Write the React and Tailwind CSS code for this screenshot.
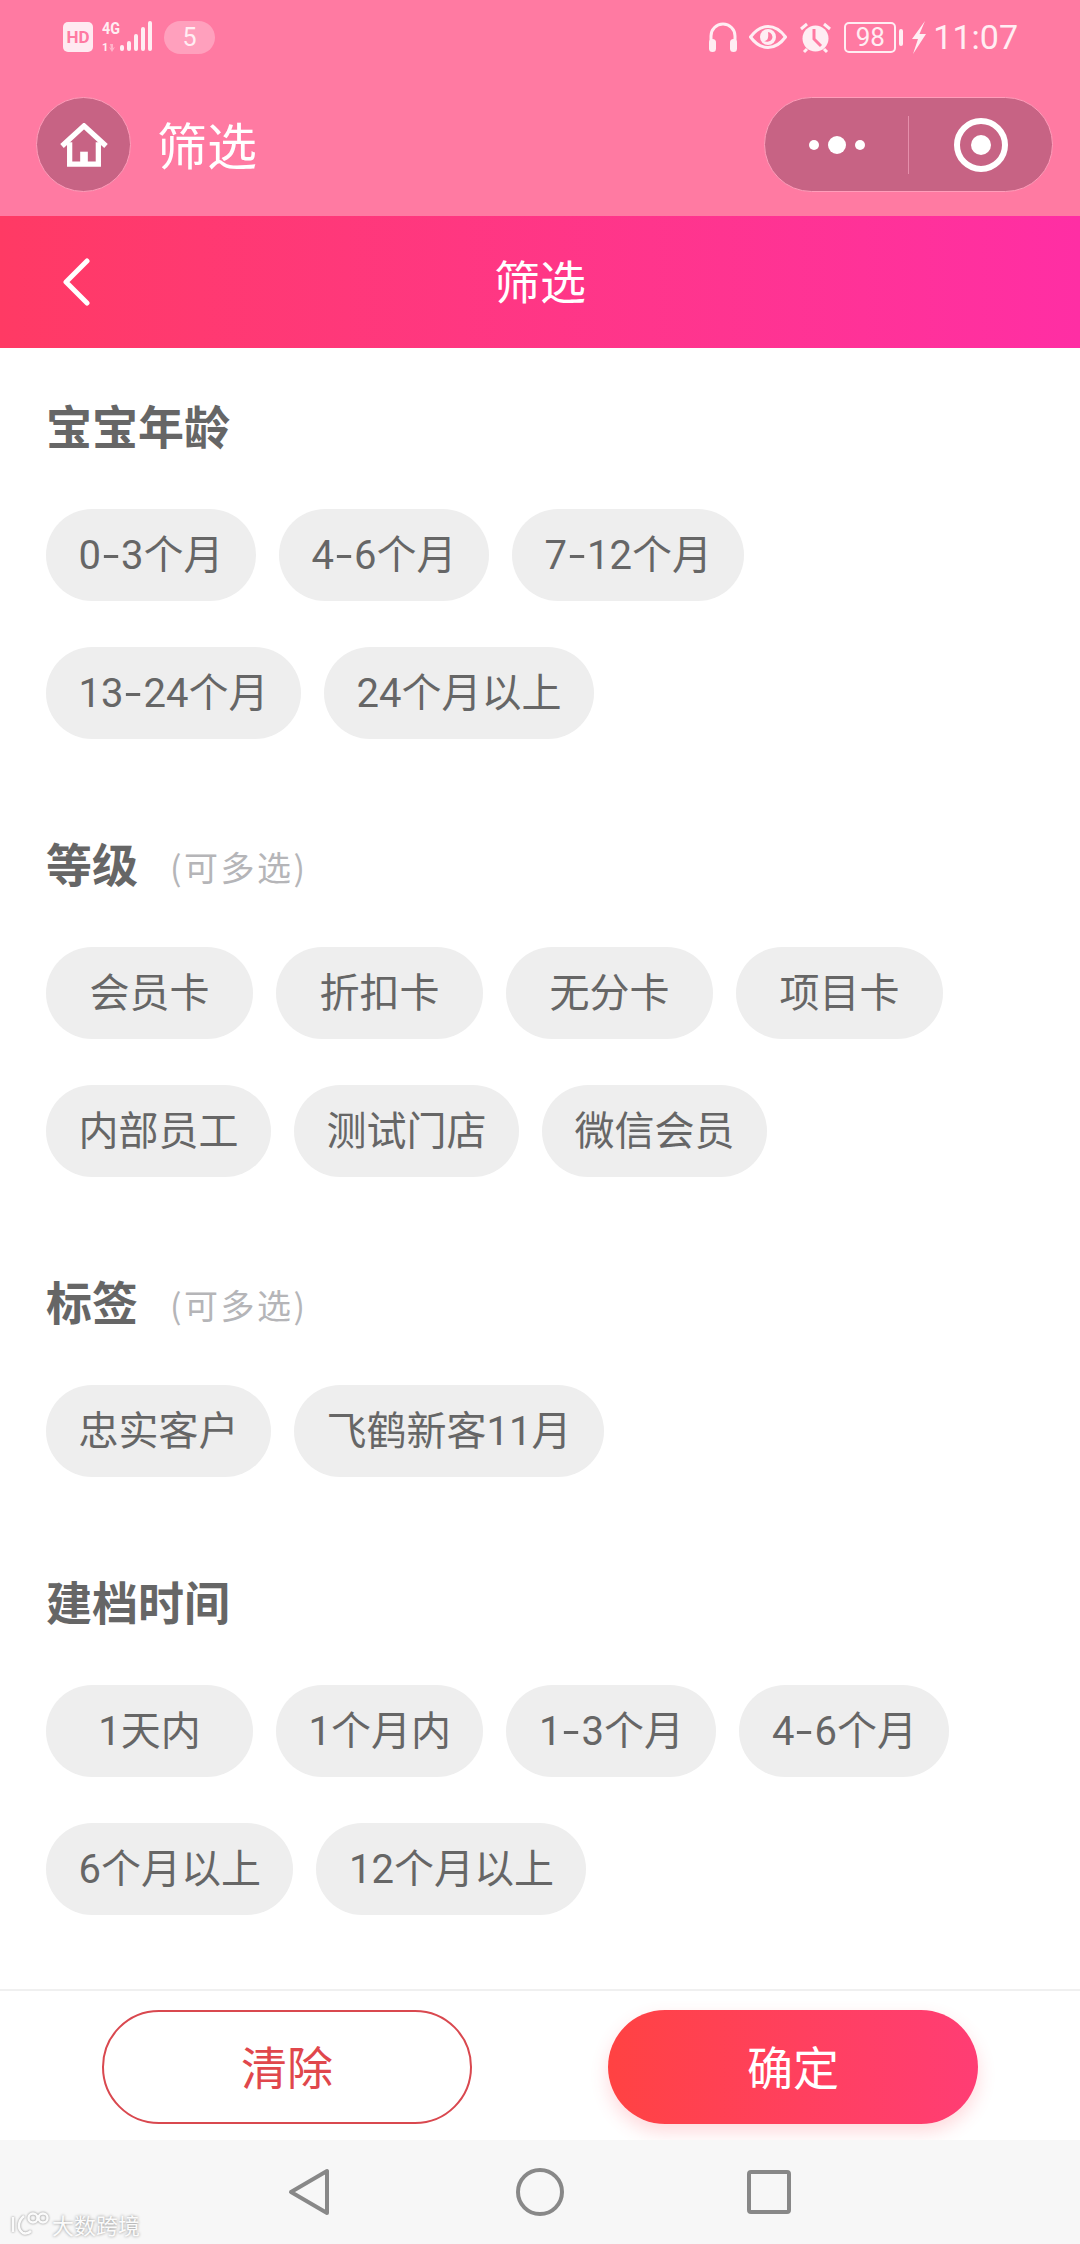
import React from "react";

const sections = [
  { title: "宝宝年龄", rows: [["0-3个月", "4-6个月", "7-12个月"], ["13-24个月", "24个月以上"]] },
  { title: "等级", multi: true, rows: [["会员卡", "折扣卡", "无分卡", "项目卡"], ["内部员工", "测试门店", "微信会员"]] },
  { title: "标签", multi: true, rows: [["忠实客户", "飞鹤新客11月"]] },
  { title: "建档时间", rows: [["1天内", "1个月内", "1-3个月", "4-6个月"], ["6个月以上", "12个月以上"]] },
];

function StatusBar() {
  return (
    <div className="h-[74px] flex items-center justify-between pl-[63px] pr-[62px] text-[#ffeef3]">
      <div className="flex items-center">
        <div className="w-[30px] h-[30px] rounded-[5px] bg-[#ffeaf1] text-[#ff7aa2] text-[17px] font-bold leading-none flex items-center justify-center" style={{ fontFamily: "Roboto, sans-serif" }}>HD</div>
        {/* 4G + signal */}
        <svg width="52" height="32" viewBox="0 0 52 32" className="ml-[9px]" fill="#ffeef3">
          <text x="0" y="13" fontSize="16" fontWeight="700" textLength="18" lengthAdjust="spacingAndGlyphs" fontFamily="Roboto, sans-serif">4G</text>
          <text x="0" y="30" fontSize="11" fontWeight="700" fontFamily="Roboto, sans-serif">1</text>
          <path d="M8 23h3v4l2-1-3 5-3-5 2 1z" fill="#ffb3c9" />
          <rect x="18" y="24" width="4" height="6" rx="2" />
          <rect x="25" y="20" width="4" height="10" rx="2" />
          <rect x="32" y="13" width="4" height="17" rx="2" />
          <rect x="39" y="6" width="4" height="24" rx="2" />
          <rect x="46" y="0" width="4" height="30" rx="2" />
        </svg>
        <div className="ml-[10px] w-[51px] h-[33px] rounded-full bg-[#ffa0bd] text-[#ffeef3] text-[25px] leading-[33px] text-center" style={{ fontFamily: "Roboto, sans-serif" }}>5</div>
      </div>
      <div className="flex items-center">
        <svg width="30" height="32" viewBox="0 0 30 32" fill="none">
          <path d="M3 22V15a12 12 0 0 1 24 0v7" stroke="#ffeef3" strokeWidth="3" />
          <rect x="1" y="18" width="7" height="13" rx="3.5" fill="#ffeef3" />
          <rect x="22" y="18" width="7" height="13" rx="3.5" fill="#ffeef3" />
        </svg>
        <svg width="38" height="24" viewBox="0 0 38 24" fill="none" className="ml-[11px]">
          <path d="M1.500 12C7 4.500 12.500 1.500 19 1.500S31 4.500 36.500 12C31 19.500 25.500 22.500 19 22.500S7 19.500 1.500 12z" stroke="#ffeef3" strokeWidth="3" />
          <circle cx="19" cy="12" r="8" fill="#ffeef3" />
          <path d="M19 7a5 5 0 0 1 4 7 6 6 0 0 1-8 2c3 0 5-2 4-9z" fill="#ff7aa2" />
        </svg>
        <svg width="33" height="33" viewBox="0 0 33 33" className="ml-[12px]" fill="none">
          <circle cx="16.500" cy="17.500" r="13" fill="#ffeef3" />
          <path d="M15 8v10l7 7" stroke="#ff7aa2" strokeWidth="3" />
          <path d="M2 8l6-5M31 8l-6-5M5 31l3-3M28 31l-3-3" stroke="#ffeef3" strokeWidth="3" />
        </svg>
        <div className="ml-[12px] w-[52px] h-[31px] rounded-[5px] border-2 border-[#ffeef3] text-[26px] leading-[27px] text-center" style={{ fontFamily: "Roboto, sans-serif" }}>98</div>
        <div className="ml-[3px] w-[4px] h-[17px] rounded-[2px] bg-[#ffeef3]" />
        <svg width="15" height="33" viewBox="0 0 15 33" className="ml-[8px]" fill="#ffeef3">
          <path d="M14 0L1 18h6L2 33l13-20H8.500L14 0z" />
        </svg>
        <span className="ml-[7px] text-[34px] leading-none" style={{ fontFamily: "Roboto, sans-serif" }}>11:07</span>
      </div>
    </div>
  );
}

function MiniBar() {
  return (
    <div className="h-[142px] flex items-start justify-between pt-[23px] pl-[36px] pr-[27px]">
      <div className="flex items-center">
        <div className="w-[95px] h-[95px] rounded-full bg-[#c76384] border border-[#ff9dba] flex items-center justify-center">
          <svg width="48" height="44" viewBox="0 0 50 46" fill="none">
            <path d="M2 24L25 3l23 21" stroke="#fff" strokeWidth="5.500" strokeLinejoin="miter" />
            <path d="M10 20v23h30V20" stroke="#fff" strokeWidth="5.500" />
            <rect x="21" y="30" width="8" height="12" fill="#fff" />
          </svg>
        </div>
        <span className="ml-[26px] pb-[4px] text-[50px] leading-none text-white">筛选</span>
      </div>
      <div className="w-[289px] h-[95px] rounded-full bg-[#c76384] border border-[#ff9dba] flex items-center">
        <div className="w-[143px] flex items-center justify-center gap-[9px]">
          <span className="w-[10px] h-[10px] rounded-full bg-white" />
          <span className="w-[18px] h-[18px] rounded-full bg-white" />
          <span className="w-[10px] h-[10px] rounded-full bg-white" />
        </div>
        <div className="w-[1px] h-[58px] bg-[#e58fab]" />
        <div className="flex-1 flex items-center justify-center">
          <div className="w-[54px] h-[54px] rounded-full border-[6px] border-white flex items-center justify-center">
            <span className="w-[20px] h-[20px] rounded-full bg-white" />
          </div>
        </div>
      </div>
    </div>
  );
}

// the hyphen in the reference font is wider than Roboto's
function ChipLabel({ text }) {
  const parts = text.split("-");
  if (parts.length === 1) return text;
  return (
    <>
      {parts[0]}
      <span className="inline-block w-[20px] text-center scale-x-150">-</span>
      {parts[1]}
    </>
  );
}

function Section({ title, multi, rows }) {
  return (
    <div className="mb-[96px]">
      <div className="h-[62px] flex items-center pl-[46px] mb-[50px]">
        <span className="pb-[8px] text-[46px] leading-none font-bold text-[#666666]">{title}</span>
        {multi && <span className="ml-[32px] mt-[2px] text-[34px] leading-none tracking-[2.5px] text-[#b5b5b8]">(可多选)</span>}
      </div>
      <div className="flex flex-col gap-y-[46px] px-[46px]">
        {rows.map((row, i) => (
          <div key={i} className="flex gap-x-[23px]">
            {row.map((chip) => (
              <div
                key={chip}
                className="h-[92px] min-w-[207px] px-[32.5px] pt-[1px] rounded-full bg-[#eeeeee] text-[#666666] text-[40px] leading-none flex items-center justify-center whitespace-nowrap"
                style={{ fontFamily: 'Roboto, "Noto Sans CJK SC", sans-serif' }}
              >
                <span><ChipLabel text={chip} /></span>
              </div>
            ))}
          </div>
        ))}
      </div>
    </div>
  );
}

export default function App() {
  return (
    <div className="h-[2244px] flex flex-col bg-white overflow-hidden" style={{ fontFamily: '"Noto Sans CJK SC", sans-serif' }}>
      <div className="bg-[#ff7aa2]">
        <StatusBar />
        <MiniBar />
      </div>
      <div className="h-[132px] shrink-0 bg-gradient-to-r from-[#ff3a64] to-[#ff2ea4] grid grid-cols-[1fr_auto_1fr] items-center">
        <div className="pl-[62px]">
          <svg width="28" height="48" viewBox="0 0 28 48" fill="none">
            <path d="M25 3L4 24l21 21" stroke="#fff" strokeWidth="5" strokeLinecap="round" strokeLinejoin="round" />
          </svg>
        </div>
        <span className="pb-[6px] text-[46px] text-white leading-none">筛选</span>
        <div />
      </div>
      <div className="flex-1 min-h-0 pt-[49px]">
        {sections.map((s) => (
          <Section key={s.title} {...s} />
        ))}
      </div>
      <div className="h-[151px] shrink-0 border-t-2 border-[#f0f0f0] flex items-start justify-between pt-[19px] pl-[102px] pr-[102px]">
        <button className="w-[370px] h-[114px] pb-[4px] rounded-full border-2 border-[#d9484f] text-[#e0474c] text-[46px] leading-none">清除</button>
        <button className="w-[370px] h-[114px] pb-[4px] rounded-full bg-gradient-to-r from-[#ff4242] to-[#ff3d74] text-white text-[46px] leading-none shadow-[0_8px_18px_rgba(255,64,80,0.2)]">确定</button>
      </div>
      <div className="relative h-[104px] shrink-0 bg-[#f7f7f7] flex items-center pl-[288px]">
        <svg width="42" height="48" viewBox="0 0 42 48" fill="none">
          <path d="M39 3v42L3 24 39 3z" stroke="#888" strokeWidth="4" strokeLinejoin="round" />
        </svg>
        <svg width="48" height="48" viewBox="0 0 48 48" fill="none" className="ml-[186px]">
          <circle cx="24" cy="24" r="22" stroke="#888" strokeWidth="4" />
        </svg>
        <svg width="44" height="46" viewBox="0 0 44 46" fill="none" className="ml-[183px]">
          <rect x="2" y="3" width="40" height="40" rx="2" stroke="#888" strokeWidth="4" />
        </svg>
        {/* watermark */}
        <div className="absolute left-[10px] bottom-[8px] flex items-center text-[#fbfbfb] [text-shadow:0_0_3px_#8a8a8a]">
          <svg width="40" height="24" viewBox="0 0 40 24" fill="none" stroke="#fbfbfb" strokeWidth="2.500" className="[filter:drop-shadow(0_0_1px_#888)]">
            <path d="M3 5v15M14 4C8 9 7 17 13 21c3 1 6 0 8-2" />
            <circle cx="23" cy="6" r="4.500" />
            <circle cx="33" cy="6" r="4.500" />
          </svg>
          <span className="ml-[2px] text-[22px] leading-none">大数跨境</span>
        </div>
      </div>
    </div>
  );
}
